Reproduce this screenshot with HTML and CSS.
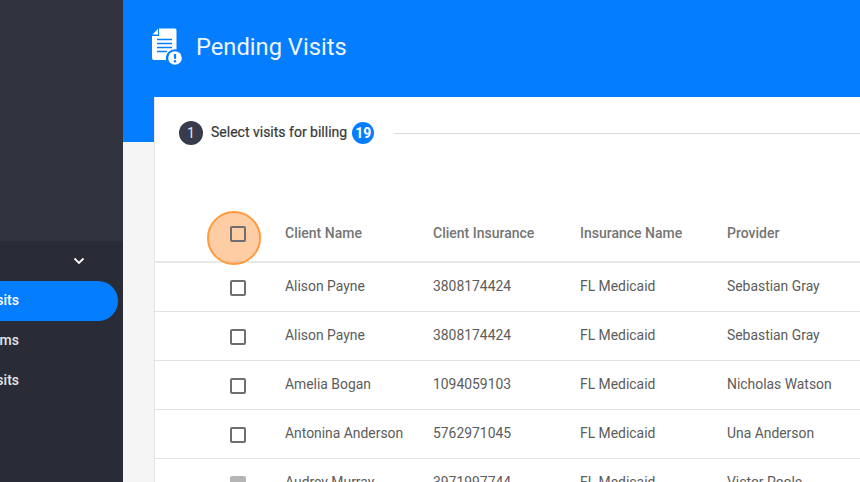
FILE: index.html
```html
<!DOCTYPE html>
<html lang="en">
<head>
<meta charset="utf-8">
<title>Pending Visits</title>
<link rel="stylesheet" href="styles.css">
</head>
<body>
<div class="app">
  <aside class="sidebar">
    <div class="side-top"></div>
    <div class="side-group">
      <div class="group-head">
        <svg class="chev" width="12" height="8" viewBox="0 0 12 8"><path d="M1.500 1.500 6 6l4.500-4.500" fill="none" stroke="#fff" stroke-width="1.800"/></svg>
      </div>
      <div class="nav-item active"><span>Pending Visits</span></div>
      <div class="nav-item"><span>Claims</span></div>
      <div class="nav-item"><span>Paid Visits</span></div>
    </div>
  </aside>
  <main class="main">
    <header class="banner">
      <svg class="page-icon" width="31" height="37" viewBox="0 0 31 37">
        <path d="M7 .5h15a2 2 0 0 1 2.500 2V21.500a9 9 0 0 0-10.500 10.500H2a2 2 0 0 1-2-2V8h7z" fill="#fff"/>
        <path d="M.5 6.500 6 .8v5.700z" fill="#fff"/>
        <path d="M5 11.500h15M5 15.500h15M5 19.500h15M5 23.500h10" stroke="#057dff" stroke-width="1.700"/>
        <circle cx="23" cy="30" r="6.800" fill="#fff"/>
        <path d="M23 26v4.800" stroke="#057dff" stroke-width="2.200"/>
        <circle cx="23" cy="33.300" r="1.200" fill="#057dff"/>
      </svg>
      <h1 class="page-title">Pending Visits</h1>
    </header>
    <section class="card">
      <div class="stepper">
        <span class="step-num">1</span>
        <span class="step-label">Select visits for billing</span>
        <span class="step-badge">19</span>
        <span class="step-line"></span>
      </div>
      <table class="visits">
        <thead>
          <tr>
            <th class="col-check">
              <span class="check-wrap">
                <span class="pulse"></span>
                <span class="box"></span>
              </span>
            </th>
            <th class="col-name">Client Name</th>
            <th class="col-ins">Client Insurance</th>
            <th class="col-iname">Insurance Name</th>
            <th class="col-prov">Provider</th>
          </tr>
        </thead>
        <tbody>
          <tr><td class="col-check"><span class="box"></span></td><td>Alison Payne</td><td>3808174424</td><td>FL Medicaid</td><td>Sebastian Gray</td></tr>
          <tr><td class="col-check"><span class="box"></span></td><td>Alison Payne</td><td>3808174424</td><td>FL Medicaid</td><td>Sebastian Gray</td></tr>
          <tr><td class="col-check"><span class="box"></span></td><td>Amelia Bogan</td><td>1094059103</td><td>FL Medicaid</td><td>Nicholas Watson</td></tr>
          <tr><td class="col-check"><span class="box"></span></td><td>Antonina Anderson</td><td>5762971045</td><td>FL Medicaid</td><td>Una Anderson</td></tr>
          <tr><td class="col-check"><span class="box box-disabled"></span></td><td>Audrey Murray</td><td>3971997744</td><td>FL Medicaid</td><td>Victor Poole</td></tr>
        </tbody>
      </table>
    </section>
  </main>
</div>
</body>
</html>
```
FILE: styles.css
```css
* { box-sizing: border-box; }
html, body { margin: 0; height: 100%; overflow: hidden; }
body { font-family: Roboto, "Liberation Sans", sans-serif; background: #f5f5f5; color: #5f5f5f; }
.app { display: flex; width: 860px; height: 482px; overflow: hidden; }

.sidebar { width: 123px; flex: none; background: #31343f; display: flex; flex-direction: column; }
.side-top { height: 241px; background: #31343f; }
.side-group { flex: 1; display: flex; flex-direction: column; background: #292c36; }
.group-head { height: 40px; display: flex; align-items: center; justify-content: flex-end; padding-right: 38px; }
.chev { display: block; }
.nav-item { height: 40px; width: 118px; display: flex; align-items: center; justify-content: flex-end; overflow: hidden; font-size: 14px; font-weight: 500; color: #e3e5ea; white-space: nowrap; padding: 0 99px 2px 0; }
.nav-item.active { background: #057dff; border-radius: 0 20px 20px 0; color: #fff; }

.main { flex: 1; min-width: 0; display: flex; flex-direction: column; position: relative; }
.banner { height: 142px; flex: none; background: #057dff; display: flex; align-items: flex-start; padding: 28px 0 0 29px; gap: 13px; }
.page-icon { display: block; flex: none; }
.page-title { margin: 3px 0 0; font-size: 23.7px; line-height: 32px; font-weight: 400; color: #eef6ff; }

.card { margin: -45px 0 0 31px; width: 760px; flex: 1; background: #fff; border-left: 1px solid #e6e6e6; }
.stepper { height: 112px; display: flex; align-items: flex-start; padding: 24px 0 0 24px; }
.step-num { width: 24px; height: 24px; border-radius: 50%; background: #373b4b; color: #e6e7ea; font-size: 14px; display: flex; align-items: center; justify-content: center; }
.step-label { margin: -1px 0 0 8px; font-size: 14px; line-height: 24px; font-weight: 400; color: #383838; -webkit-text-stroke: 0.2px #383838; }
.step-badge { margin-left: 5px; width: 22px; height: 22px; border-radius: 50%; background: #057dff; color: #fff; font-size: 14px; font-weight: 700; display: flex; align-items: center; justify-content: center; margin-top: 1px; }
.step-line { flex: 1; height: 1px; background: #dcdcdc; margin: 12px 0 0 20px; }

.visits { border-collapse: collapse; table-layout: fixed; width: 100%; font-size: 14px; }
.visits th { height: 53px; padding: 0 0 5px; text-align: left; font-weight: 500; color: #757575; border-bottom: 2px solid #e8e8e8; }
.visits td { height: 49px; padding: 0 0 2px; font-size: 13.9px; color: #5c5c5c; border-bottom: 1px solid #e2e2e2; white-space: nowrap; }
.col-check { width: 130px; }
.col-name { width: 148px; }
.col-ins { width: 147px; }
.col-iname { width: 147px; }
.visits th.col-check { padding-left: 75px; }
.visits td.col-check { padding-left: 75px; }

.check-wrap { position: relative; display: block; width: 16px; height: 16px; margin-top: 3px; }
.visits td .box { margin-top: 4px; }
.box { display: block; width: 16px; height: 16px; border: 2px solid #6e6e6e; border-radius: 2px; position: relative; }
.box-disabled { background: #b5b5b5; border-color: #b5b5b5; }
.pulse { position: absolute; left: -23px; top: -15px; width: 54px; height: 54px; border-radius: 50%; background: rgba(255, 145, 50, 0.45); border: 2px solid #ff9a3d; }
```
